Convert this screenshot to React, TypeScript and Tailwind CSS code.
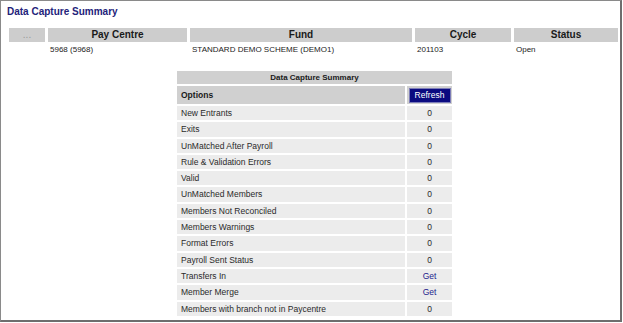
const columns = [
  { label: "...", width: "w-[36px]", muted: true },
  { label: "Pay Centre", width: "w-[139px]" },
  { label: "Fund", width: "w-[222px]" },
  { label: "Cycle", width: "w-[96px]" },
  { label: "Status", width: "w-[104px]" },
];

const values = ["", "5968 (5968)", "STANDARD DEMO SCHEME (DEMO1)", "201103", "Open"];

const summaryRows: { label: string; value: string; link?: boolean }[] = [
  { label: "New Entrants", value: "0" },
  { label: "Exits", value: "0" },
  { label: "UnMatched After Payroll", value: "0" },
  { label: "Rule & Validation Errors", value: "0" },
  { label: "Valid", value: "0" },
  { label: "UnMatched Members", value: "0" },
  { label: "Members Not Reconciled", value: "0" },
  { label: "Members Warnings", value: "0" },
  { label: "Format Errors", value: "0" },
  { label: "Payroll Sent Status", value: "0" },
  { label: "Transfers In", value: "Get", link: true },
  { label: "Member Merge", value: "Get", link: true },
  { label: "Members with branch not in Paycentre", value: "0" },
];

export default function App() {
  return (
    <div className="w-[623px] h-[323px] bg-white font-['Liberation_Sans',Arial,sans-serif]">
      <div className="w-[622px] h-[322px] border-l border-t border-r-2 border-b-2 border-l-[#8a8a8a] border-t-[#8a8a8a] border-r-[#6e6e6e] border-b-[#6e6e6e] flex flex-col">
        <h1 className="pl-[6px] pt-[4px] h-[27px] text-[10px] font-bold text-[#23237a] leading-[14px]">
          Data Capture Summary
        </h1>

        {/* pay centre header */}
        <div className="flex gap-[3px] pl-[8px]">
          {columns.map((c) => (
            <div
              key={c.label}
              className={`${c.width} h-[14px] bg-[#cdcdcd] text-center text-[10px] font-bold leading-[14px] ${
                c.muted ? "text-[#9a9a9a] font-normal" : "text-[#1a1a1a]"
              }`}
            >
              {c.label}
            </div>
          ))}
        </div>
        <div className="flex gap-[3px] pl-[8px] pt-[1px]">
          {columns.map((c, i) => (
            <div key={c.label} className={`${c.width} pl-[2px] h-[13px] text-[8px] leading-[13px] text-[#222]`}>
              {values[i]}
            </div>
          ))}
        </div>

        {/* summary table */}
        <div className="ml-[176px] mt-[15px] w-[275px] flex flex-col gap-[2px]">
          <div className="h-[13px] bg-[#d0d0d0] text-center text-[8px] font-bold leading-[13px] text-[#1a1a1a]">
            Data Capture Summary
          </div>
          <div className="flex gap-[2px] h-[18px]">
            <div className="flex-1 bg-[#d0d0d0] pl-[4px] text-[8.5px] font-bold leading-[18px] text-[#1a1a1a]">
              Options
            </div>
            <div className="w-[45px] bg-[#d0d0d0] flex items-center justify-center">
              <button className="w-[42px] h-[15px] bg-[#0a0a80] border border-[#7c7cb8] text-white text-[8.5px] leading-[13px]">
                Refresh
              </button>
            </div>
          </div>
          {summaryRows.map((r) => (
            <div key={r.label} className="flex gap-[2px] h-[14.3px]">
              <div className="flex-1 bg-[#ececec] pl-[4px] text-[8.5px] leading-[14px] text-[#2a2a2a]">
                {r.label}
              </div>
              <div
                className={`w-[45px] bg-[#ececec] text-center text-[8.5px] leading-[14px] ${
                  r.link ? "text-[#1c1c8c]" : "text-[#2a2a2a]"
                }`}
              >
                {r.value}
              </div>
            </div>
          ))}
        </div>
      </div>
    </div>
  );
}
